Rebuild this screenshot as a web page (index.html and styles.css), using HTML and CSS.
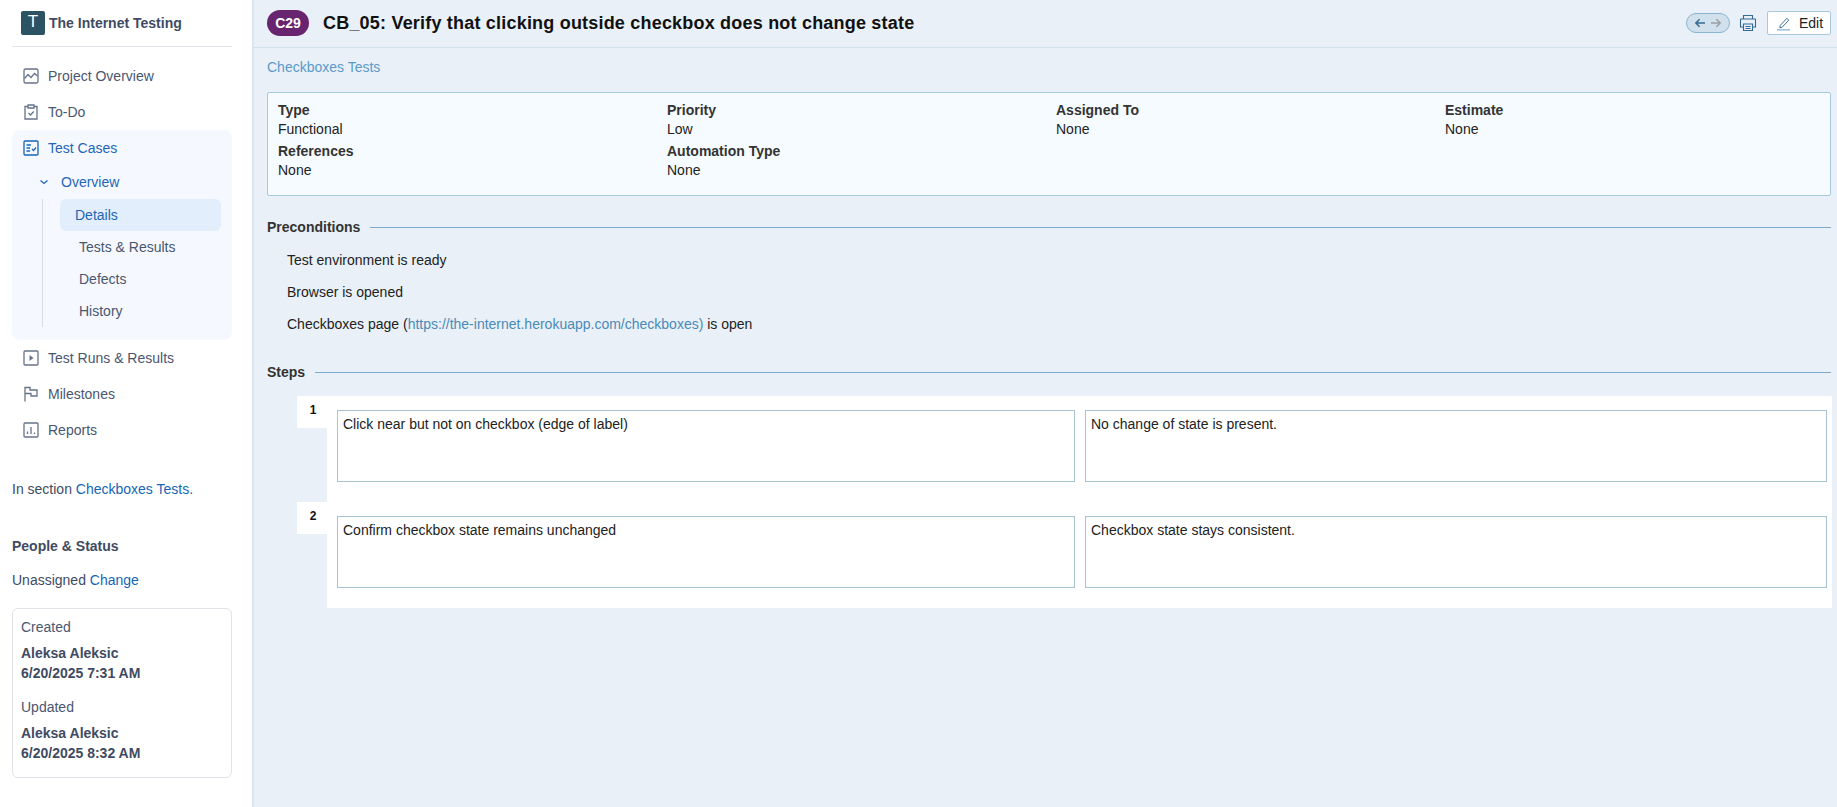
FILE: index.html
```html
<!DOCTYPE html>
<html lang="en">
<head>
<meta charset="utf-8">
<title>CB_05</title>
<link rel="stylesheet" href="styles.css">
</head>
<body>
<div class="app">
  <aside class="sidebar">
    <div class="brand"><span class="tile">T</span><span class="brand-name">The Internet Testing</span></div>
    <nav class="nav">
      <a class="nav-item"><svg class="ico" viewBox="0 0 16 16"><rect x="1" y="1" width="14" height="14" rx="1.5"/><path d="M1.5 10.5 5 6.5l3 3 3.5-4 3 2.5"/></svg>Project Overview</a>
      <a class="nav-item"><svg class="ico" viewBox="0 0 16 16"><path d="M5 2.5H2v12.5h12V2.5h-3"/><path d="M5 1h6v3H5z"/><path d="m5.5 9 2 2 3.2-3.5"/></svg>To-Do</a>
      <div class="nav-group">
        <a class="nav-item active"><svg class="ico" viewBox="0 0 16 16"><rect x="1" y="1" width="14" height="14" rx="1"/><path d="M3.5 5H8M3.5 8H7M3.5 11H7"/><path d="m9 9 1.5 1.5L13 7.5"/></svg>Test Cases</a>
        <a class="sub-head"><svg class="chev" viewBox="0 0 10 10"><path d="m1.5 3.5 3.5 3 3.5-3"/></svg>Overview</a>
        <div class="sub-list">
          <a class="sub-item current">Details</a>
          <a class="sub-item">Tests &amp; Results</a>
          <a class="sub-item">Defects</a>
          <a class="sub-item">History</a>
        </div>
      </div>
      <a class="nav-item"><svg class="ico" viewBox="0 0 16 16"><rect x="1" y="1" width="14" height="14" rx="1"/><path class="fill" d="M6.5 5v6l4-3z"/></svg>Test Runs &amp; Results</a>
      <a class="nav-item"><svg class="ico" viewBox="0 0 16 16"><path d="M2 15.5V1.5h5v2.500h7V10H8V7.500H2"/></svg>Milestones</a>
      <a class="nav-item"><svg class="ico" viewBox="0 0 16 16"><rect x="1" y="1" width="14" height="14" rx="1"/><path d="M4.500 12V9.500M8 12V5M11.500 12v-1.500"/></svg>Reports</a>
    </nav>
    <p class="section-note">In section <a class="blue">Checkboxes Tests.</a></p>
    <h3 class="people">People &amp; Status</h3>
    <p class="assign">Unassigned <a class="blue">Change</a></p>
    <div class="meta-card">
      <div class="meta-label">Created</div>
      <div class="meta-val">Aleksa Aleksic<br>6/20/2025 7:31 AM</div>
      <div class="meta-label second">Updated</div>
      <div class="meta-val">Aleksa Aleksic<br>6/20/2025 8:32 AM</div>
    </div>
  </aside>
  <main class="main">
    <header class="topbar">
      <span class="badge">C29</span>
      <h1 class="title">CB_05: Verify that clicking outside checkbox does not change state</h1>
      <div class="actions">
        <span class="pager">
          <svg class="arrow" viewBox="0 0 14 12"><path d="M13 6H2M6.500 1.500 2 6l4.500 4.500"/></svg>
          <svg class="arrow off" viewBox="0 0 14 12"><path d="M1 6h11M7.500 1.500 12 6l-4.500 4.500"/></svg>
        </span>
        <svg class="printer" viewBox="0 0 18 18"><path d="M4.500 5V1.500h9V5"/><path d="M4.500 13H1.500V5.500a.5.5 0 0 1 .5-.5h14a.5.5 0 0 1 .5.5V13h-3"/><path d="M4.500 10h9v6.500h-9z"/><path d="M6.500 12.500h5M6.500 14.500h5"/></svg>
        <button class="edit"><svg class="pen" viewBox="0 0 16 16"><path d="M3.500 10.500 10.500 3l2 2-7 7.500-2.500.5z"/><path class="pen-line" d="M0 15.300h14"/></svg>Edit</button>
      </div>
    </header>
    <div class="content">
      <a class="crumb">Checkboxes Tests</a>
      <section class="info">
        <div class="field"><b>Type</b><span>Functional</span></div>
        <div class="field"><b>Priority</b><span>Low</span></div>
        <div class="field"><b>Assigned To</b><span>None</span></div>
        <div class="field"><b>Estimate</b><span>None</span></div>
        <div class="field"><b>References</b><span>None</span></div>
        <div class="field"><b>Automation Type</b><span>None</span></div>
      </section>
      <h2 class="legend">Preconditions</h2>
      <div class="pre">
        <p>Test environment is ready</p>
        <p>Browser is opened</p>
        <p>Checkboxes page (<a class="link">https://the-internet.herokuapp.com/checkboxes)</a> is open</p>
      </div>
      <h2 class="legend steps-legend">Steps</h2>
      <div class="steps">
        <div class="step">
          <span class="num">1</span>
          <div class="step-body">
            <div class="cell">Click near but not on checkbox (edge of label)</div>
            <div class="cell">No change of state is present.</div>
          </div>
        </div>
        <div class="step">
          <span class="num">2</span>
          <div class="step-body">
            <div class="cell">Confirm checkbox state remains unchanged</div>
            <div class="cell">Checkbox state stays consistent.</div>
          </div>
        </div>
      </div>
    </div>
  </main>
</div>
</body>
</html>
```

FILE: styles.css
```css
* { box-sizing: border-box; }
html, body { margin: 0; height: 100%; }
body { font-family: "Liberation Sans", Arial, sans-serif; font-size: 14px; color: #222; background: #e9f0f7; overflow: hidden; }
.app { display: flex; height: 807px; }
.sidebar { width: 254px; flex: none; background: #fff; border-right: 2px solid #dde5ee; padding: 0 20px 0 12px; color: #3f4b63; }
.brand { display: flex; align-items: center; height: 47px; border-bottom: 1px solid #e1e4e9; padding-left: 9px; padding-bottom: 1px; }
.tile { width: 24px; height: 24px; border-radius: 2px; background: #2c5364; color: #fff; font-size: 17px; display: flex; align-items: center; justify-content: center; padding-bottom: 2px; margin-right: 4px; }
.brand-name { font-weight: 700; color: #3f4b63; }
.nav { display: block; padding-top: 11px; }
.nav-item { display: flex; align-items: center; height: 36px; padding-left: 11px; color: #4a5670; }
.ico { width: 16px; height: 16px; margin-right: 9px; flex: none; fill: none; stroke: #667389; stroke-width: 1.3; }
.ico .fill { fill: #667389; stroke: none; }
.nav-group { background: #f5f9ff; border-radius: 8px; height: 210px; }
.nav-item.active { color: #1f66b8; }
.nav-item.active .ico { stroke: #1566b7; }
.sub-head { display: flex; align-items: center; height: 34px; padding-left: 27px; color: #1f66b8; margin-top: -1px; }
.chev { width: 10px; height: 10px; margin-right: 12px; fill: none; stroke: #1f66b8; stroke-width: 1.3; }
.sub-list { margin-left: 30px; border-left: 1px solid #d9dde3; padding-left: 17px; width: 179px; height: 128px; }
.sub-item { display: flex; align-items: center; height: 32px; padding-left: 4px; color: #4a5670; }
.sub-item.current { background: #e2eefb; border-radius: 6px; padding-left: 15px; margin-left: 0; color: #1f66b8; }
.sub-item:not(.current) { padding-left: 19px; }
.section-note { margin: 33px 0 0; line-height: 16px; height: 16px; }
.blue { color: #1566b7; }
.people { margin: 41px 0 0; font-size: 14px; line-height: 16px; color: #3f4b63; }
.assign { margin: 18px 0 0; line-height: 16px; }
.meta-card { margin-top: 20px; border: 1px solid #e0e3e8; border-radius: 6px; height: 170px; padding: 10px 8px 0; }
.meta-label { line-height: 16px; color: #4a5670; }
.meta-label.second { margin-top: 16px; }
.meta-val { margin-top: 8px; font-weight: 700; line-height: 20px; color: #3f4b63; }
.main { flex: 1; min-width: 0; }
.topbar { height: 48px; display: flex; align-items: center; padding: 0 6px 2px 13px; border-bottom: 1px solid #d3e1ec; }
.badge { width: 42px; height: 26px; border-radius: 13px; background: #68246f; color: #fff; font-weight: 700; font-size: 14px; display: flex; align-items: center; justify-content: center; margin-right: 14px; }
.title { margin: 0; font-size: 18px; line-height: 24px; font-weight: 700; color: #111; letter-spacing: 0.2px; flex: 1; }
.actions { display: flex; align-items: center; }
.pager { display: flex; align-items: center; justify-content: center; gap: 4px; width: 44px; height: 20px; border: 1px solid #8ab4d4; border-radius: 10px; background: #d0e0ec; }
.arrow { width: 12px; height: 10px; fill: none; stroke: #336b95; stroke-width: 1.8; }
.arrow.off { stroke: #9a9fa5; }
.printer { width: 18px; height: 18px; margin: 0 10px 0 9px; fill: none; stroke: #336b95; stroke-width: 1.1; }
.edit { width: 64px; height: 24px; background: #fff; border: 1px solid #a8c8de; border-radius: 2px; font: 14px "Liberation Sans", Arial, sans-serif; color: #222; display: flex; align-items: center; padding: 0 0 0 9px; }
.pen { width: 15px; height: 16px; margin-right: 7px; fill: none; stroke: #336b95; stroke-width: 1; }
.pen-line { stroke: #8ab4d4; stroke-width: 1.4; }
.content { padding: 0 6px 0 13px; }
.crumb { display: block; margin-top: 11px; line-height: 16px; color: #5b9ac9; }
.info { margin-top: 17px; height: 104px; background: #f6fbff; border: 1px solid #a8c8de; border-radius: 2px; padding: 8px 10px; display: grid; grid-template-columns: repeat(4, 389px); grid-auto-rows: 41px; }
.field { display: flex; flex-direction: column; line-height: 19px; }
.field b { color: #333; }
.legend { margin: 23px 0 0; font-size: 14px; line-height: 16px; font-weight: 700; color: #333; display: flex; align-items: center; gap: 10px; }
.legend::after { content: ""; flex: 1; height: 1px; background: #7fabce; }
.pre { padding-left: 20px; margin-top: 17px; }
.pre p { margin: 0 0 16px; line-height: 16px; }
.link { color: #4a8ab8; }
.steps-legend { margin-top: 32px; }
.steps { margin: 16px 0 0 30px; }
.step { display: flex; align-items: flex-start; }
.num { width: 30px; height: 32px; flex: none; background: #fff; font-size: 12px; font-weight: 700; color: #111; display: flex; align-items: center; justify-content: center; padding-bottom: 4px; padding-left: 2px; }
.step-body { flex: 1; background: #fff; display: grid; grid-template-columns: 738px 742px; column-gap: 10px; padding: 14px 5px 20px 10px; }
.cell { height: 72px; border: 1px solid #a8c3d6; padding: 5px; line-height: 16px; color: #222; }
```
